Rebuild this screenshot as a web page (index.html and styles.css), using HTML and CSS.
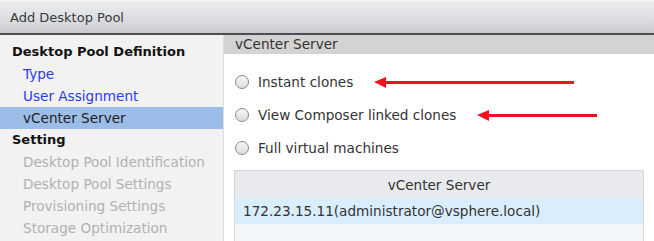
FILE: index.html
```html
<!DOCTYPE html>
<html>
<head>
<meta charset="utf-8">
<link rel="stylesheet" href="styles.css">
</head>
<body>
<div class="dialog">
  <div class="titlebar">Add Desktop Pool</div>
  <div class="main">
    <nav class="nav">
      <div class="nav-head">Desktop Pool Definition</div>
      <div class="nav-item link">Type</div>
      <div class="nav-item link">User Assignment</div>
      <div class="nav-item selected">vCenter Server</div>
      <div class="nav-head">Setting</div>
      <div class="nav-item disabled">Desktop Pool Identification</div>
      <div class="nav-item disabled">Desktop Pool Settings</div>
      <div class="nav-item disabled">Provisioning Settings</div>
      <div class="nav-item disabled">Storage Optimization</div>
    </nav>
    <section class="content">
      <div class="content-head">vCenter Server</div>
      <div class="options">
        <label class="option"><span class="radio"></span>Instant clones<span class="arrow arrow-1"></span></label>
        <label class="option"><span class="radio"></span>View Composer linked clones<span class="arrow arrow-2"></span></label>
        <label class="option"><span class="radio"></span>Full virtual machines</label>
      </div>
      <div class="table">
        <div class="th">vCenter Server</div>
        <div class="tr sel">172.23.15.11(administrator@vsphere.local)</div>
        <div class="tr empty"></div>
      </div>
    </section>
  </div>
</div>
</body>
</html>
```
FILE: styles.css
```css
* { box-sizing: border-box; }
html, body { margin: 0; padding: 0; }
body {
  width: 654px;
  height: 241px;
  overflow: hidden;
  background: #fff;
  font-family: "DejaVu Sans", Verdana, sans-serif;
  font-size: 13.6px;
  color: #333;
}
.dialog { display: flex; flex-direction: column; height: 241px; overflow: hidden; }
.titlebar {
  height: 35px;
  flex: none;
  padding: 9px 0 0 10px;
  font-size: 13px;
  background: linear-gradient(#eceef0, #d8d9dc 70%, #c9cacd);
  border-top: 1px solid #f7f7f7;
  border-bottom: 2px solid #4b4e52;
  color: #3a3a3a;
}
.main { display: flex; flex: 1; min-height: 0; overflow: hidden; }
.nav {
  width: 224px;
  flex: none;
  background: #f2f2f2;
  border-right: 1px solid #dedede;
  padding-top: 6px;
}
.nav-head { height: 22px; line-height: 22px; padding-left: 12px; font-weight: bold; font-size: 13px; color: #111; }
.nav-item { height: 22px; line-height: 22px; padding-left: 23px; }
.link { color: #2b3bea; }
.selected { background: #9dbde9; color: #222; }
.disabled { color: #b1b1b1; }
.content { flex: 1; padding-left: 10px; display: flex; flex-direction: column; }
.content-head {
  height: 19px;
  line-height: 19px;
  margin-left: -10px;
  padding-left: 11px;
  background: #d3d3d3;
}
.options { padding-top: 19px; display: flex; flex-direction: column; gap: 15px; }
.option { position: relative; display: flex; align-items: center; height: 18px; color: #333; }
.radio {
  width: 14px; height: 14px;
  margin: 0 9px 0 1px;
  border: 1px solid #8a8a8a;
  border-radius: 50%;
  background: linear-gradient(#f6f6f6, #dcdcdc);
}
.arrow {
  position: absolute;
  height: 3px;
  background: #f01020;
  top: 8px;
}
.arrow::before {
  content: "";
  position: absolute;
  left: -10px; top: -4px;
  border-right: 12px solid #f01020;
  border-top: 5px solid transparent;
  border-bottom: 6px solid transparent;
}
.arrow-1 { left: 150px; width: 190px; }
.arrow-2 { left: 253px; width: 110px; }
.table {
  margin-top: 13px;
  width: 410px;
  border-left: 1px solid #d7d7d7;
  border-right: 1px solid #d7d7d7;
}
.th {
  height: 28px; line-height: 28px;
  text-align: center;
  background: #e8eaed;
  border-top: 1px solid #d7d7d7;
  color: #333;
}
.tr { height: 26px; line-height: 26px; padding-left: 8px; }
.sel { background: #d9edfc; }
.empty { background: #f3f6fa; height: 19px; }
```
